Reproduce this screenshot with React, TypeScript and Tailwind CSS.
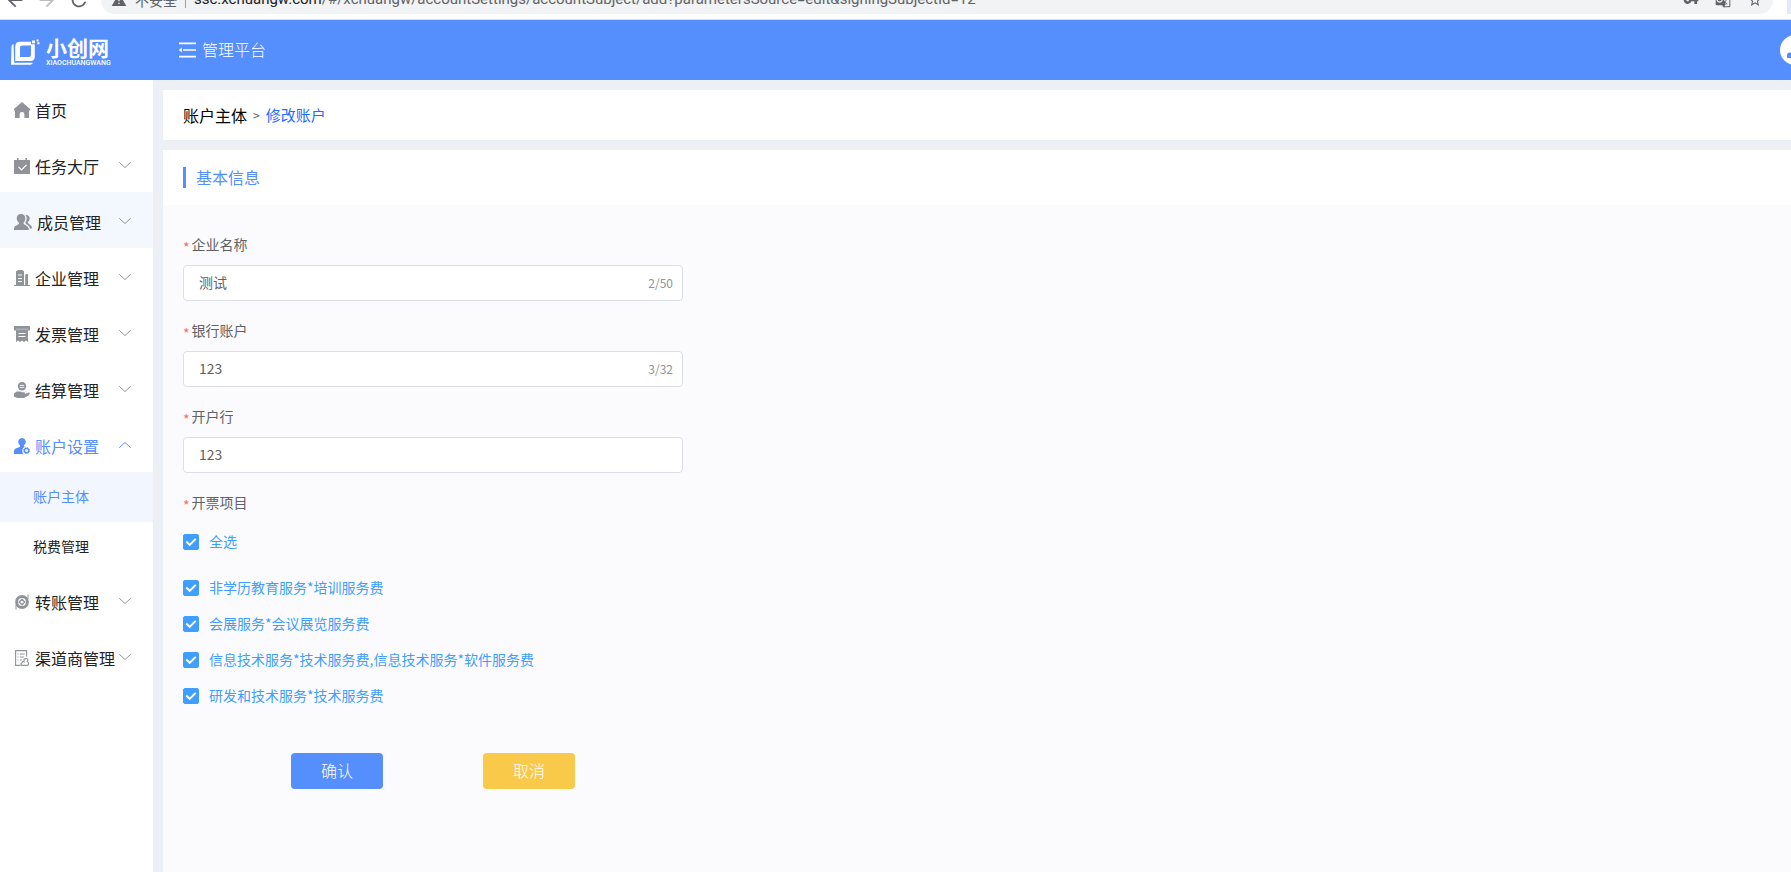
import { useState } from 'react';
import type { ReactNode } from 'react';
import {
  MdArrowBack,
  MdArrowForward,
  MdGTranslate,
  MdRefresh,
  MdStarBorder,
  MdVpnKey,
  MdWarning,
} from 'react-icons/md';

interface MenuItem {
  label: string;
  icon: ReactNode;
  children?: string[];
  leaf?: boolean;
}

/* 侧边栏图标 */
const HomeIcon = () => (
  <svg viewBox="0 0 16 16" className="size-4 shrink-0" fill="currentColor">
    <path d="M8 0 16 7v1.6h-1V16h-4.600v-3.600a2.400 2.400 0 0 0-4.800 0V16H1V8.600H0V7z" />
  </svg>
);

const TaskIcon = () => (
  <svg viewBox="0 0 16 16" className="size-4 shrink-0" fill="currentColor">
    <path d="M0 2h3V0h1.600v2h6.800V0H13v2h3v14H0z" />
    <path d="m4.500 8.800 3 3 5-5" fill="none" stroke="#fff" strokeWidth="1.200" />
  </svg>
);

const MemberIcon = () => (
  <svg viewBox="0 0 18 16" className="h-4 w-[18px] shrink-0" fill="currentColor">
    <path d="M7 0c2.600 0 4.300 1.700 4.300 4.300 0 1.700-.6 3.300-1.700 4.400v1.200l3.800 2.100c1 .6 1.400 1.300 1.400 2.500V16H0v-1.500c0-1.200.4-1.900 1.400-2.500L5 9.900V8.700C3.600 7.600 2.700 6 2.700 4.300 2.700 1.700 4.400 0 7 0z" />
    <path d="M11.400 1c2.400-.4 4.300 1 4.300 3.200 0 1.600-.8 2.900-1.900 3.700v1l2.800 2.300c1 .8 1.300 1.600 1.400 3.300h-2.200c-.2-1.800-.9-2.700-2.200-3.500l-2.300-1.300V8.400c1-1.200 1.400-2.600 1.400-4.200 0-1.300-.5-2.400-1.300-3.200z" />
    <path d="m10.600 8.700 5 6" stroke="#f3f8ff" strokeWidth=".9" fill="none" />
  </svg>
);

const CompanyIcon = () => (
  <svg viewBox="0 0 16 16" className="size-4 shrink-0" fill="currentColor">
    <path d="M2 1.500 4 0h4.500l1.500 1.500V15h1.200V4.500L14 3.800V15h2v1H0v-1h2z" />
    <path d="M4 5h4M4 8.500h4M4 11.500h4" stroke="#fff" strokeWidth="1.100" />
  </svg>
);

const InvoiceIcon = () => (
  <svg viewBox="0 0 16 16" className="size-4 shrink-0" fill="currentColor">
    <path d="M0 0h16v4.500h-2V16l-2-1.500L10 16l-2-1.500L6 16l-2-1.500L2 16V4.500H0z" />
    <path d="M2 3.200h12" stroke="#c4c6cb" strokeWidth=".8" />
    <path d="M4.500 7.500h7M4.500 10.500h7" stroke="#fff" strokeWidth="1.200" />
  </svg>
);

const SettleIcon = () => (
  <svg viewBox="0 0 16 16" className="size-4 shrink-0" fill="currentColor">
    <circle cx="8" cy="4.300" r="4.200" />
    <path d="M5.800 3.400h4.400M5.800 5.400h4.400" stroke="#fff" strokeWidth=".9" />
    <path d="M0 11.500 2.500 9.500H6l2 .8h2.800v1.500H7.500h3.800l3-1.400L16 11l-1.500 2.400L10 16H3.500L0 14.800z" />
  </svg>
);

const AccountIcon = () => (
  <svg viewBox="0 0 16 16" className="size-4 shrink-0" fill="currentColor">
    <path d="M8 0a3.800 3.800 0 0 1 2.200 6.900c-.4.300-.6.800-.2 1.200l.8.600a4.600 4.600 0 0 0-1.200 7.300H0v-2.600c0-1.600.8-2.500 2.300-3.100l3.300-1.400c.7-.4.700-1.500.2-2A3.800 3.800 0 0 1 8 0z" />
    <circle cx="12.600" cy="12.600" r="2.200" fill="none" stroke="currentColor" strokeWidth="1.300" />
    <circle cx="12.600" cy="12.600" r="3" fill="none" stroke="currentColor" strokeDasharray="1.200 1.150" />
  </svg>
);

const TransferIcon = () => (
  <svg viewBox="0 0 16 16" className="size-4 shrink-0" fill="none" stroke="currentColor">
    <circle cx="8" cy="8" r="5.400" strokeWidth="3" />
    <path d="M14 .5V5M2 11v4.500" strokeWidth="1" />
    <path d="m8 5.300 2.700 2.700L8 10.700 5.300 8z" strokeWidth="1.400" />
  </svg>
);

const ChannelIcon = () => (
  <svg viewBox="0 0 16 16" className="size-4 shrink-0" fill="none" stroke="currentColor" strokeWidth="1.100">
    <path d="M6.500 15.400H1.600V.6h11v6" />
    <path d="M3.500 4h1M5.800 4h5M3.500 7h1M5.800 7h4M3.500 10h1M5.800 10h2" />
    <path d="M8 15.400c-1.300-.2-1.500-2.300 0-2.700.1-1.100 1.300-1.600 2-.9V9.300c0-.8 1.200-.8 1.200 0 .8-1.600 3-.6 2.600 1l-.6 1.500c1.800.2 1.900 3.300 0 3.600z" />
  </svg>
);

const MENU: MenuItem[] = [
  { label: '首页', icon: <HomeIcon />, leaf: true },
  { label: '任务大厅', icon: <TaskIcon /> },
  { label: '成员管理', icon: <MemberIcon /> },
  { label: '企业管理', icon: <CompanyIcon /> },
  { label: '发票管理', icon: <InvoiceIcon /> },
  { label: '结算管理', icon: <SettleIcon /> },
  { label: '账户设置', icon: <AccountIcon />, children: ['账户主体', '税费管理'] },
  { label: '转账管理', icon: <TransferIcon /> },
  { label: '渠道商管理', icon: <ChannelIcon /> },
];

const INVOICE_ITEMS = [
  '非学历教育服务*培训服务费',
  '会展服务*会议展览服务费',
  '信息技术服务*技术服务费,信息技术服务*软件服务费',
  '研发和技术服务*技术服务费',
];

function BrowserBar() {
  return (
    <div className="flex h-5 shrink-0 items-end overflow-hidden border-b border-[#d5dae3] bg-white pb-[5px] text-[#5f6368]">
      <div className="flex h-7 shrink-0 items-center gap-2.5 pr-[11px] pl-1">
        <MdArrowBack size={22} />
        <MdArrowForward size={22} className="text-[#bbbdc0]" />
        <MdRefresh size={22} />
      </div>
      <div className="flex h-7 min-w-0 flex-1 items-center rounded-full bg-[#f1f3f4] pr-2.5 pl-2.5 text-sm">
        <MdWarning size={16} className="shrink-0" />
        <span className="ml-2 shrink-0">不安全</span>
        <span className="mx-2 h-4 w-px shrink-0 bg-[#9aa0a6]" />
        <span className="flex-1 truncate font-['Roboto'] text-[15px]">
          <span className="text-[#202124]">ssc.xchuangw.com</span>
          /#/xchuangw/accountSettings/accountSubject/add?parametersSource=edit&amp;signingSubjectId=12
        </span>
        <span className="flex shrink-0 gap-4">
          <MdVpnKey size={16} />
          <MdGTranslate size={16} />
          <MdStarBorder size={16} />
        </span>
      </div>
      <span className="ml-3.5 h-5 w-1 shrink-0 bg-[#e3e8f6]" />
    </div>
  );
}

function Logo() {
  return (
    <div className="flex w-[168px] shrink-0 items-center gap-[5px] pt-1 pl-[11px]">
      <svg viewBox="0 0 30 26" className="h-[26px] w-[30px]" fill="#fff">
        <path d="M2.500 5C1 5.600.500 6.500.500 8L0 25.700h18.500c1.700 0 2.700-.5 3.400-2H3.200z" />
        <path
          fillRule="evenodd"
          d="M9 2.800h11v2.400h3.800v12.300c0 2.800-1.400 4.500-4.300 4.500H4.200V8c0-3.500 1.500-5.200 4.800-5.200zm2.500 3.700C9.700 6.500 9 7.300 9 9v9h8.300c1.700 0 2.700-.9 2.700-2.600V6.500z"
        />
        <path d="M21 1.600h3v2.600h-3zM25.600.4h2v2h-2zM26.300 3.200h2.200v2h-2.200z" />
      </svg>
      <div className="flex flex-col gap-0.5">
        <span className="text-[21px] leading-[21px] font-bold">小创网</span>
        <span className="font-['Roboto'] text-[7px] leading-[7px] font-medium">XIAOCHUANGWANG</span>
      </div>
    </div>
  );
}

function Header() {
  return (
    <header className="flex h-15 shrink-0 items-center bg-[#558efd] text-white">
      <Logo />
      <button type="button" aria-label="收起菜单" className="ml-2.5">
        <svg viewBox="0 0 18 16" className="h-4 w-[18px]" fill="#fff">
          <path d="M1 .6h17v1.600H1zM5 7.200h13v1.600H5zM1 13.800h17v1.600H1zM.8 8l3-2.500v5z" />
        </svg>
      </button>
      <span className="ml-1.5 flex-1 pb-0.5 text-base font-light">管理平台</span>
      <div className="h-[30px] w-[11px] overflow-hidden">
        <svg viewBox="0 0 30 30" className="size-[30px]">
          <circle cx="15" cy="15" r="15" fill="#fff" />
          <path d="M7 23v-3c0-1.500 1-2.500 2.500-2.500h11c1.500 0 2.500 1 2.500 2.500v3z" fill="#558efd" />
          <circle cx="15.500" cy="12" r="4" fill="#558efd" />
        </svg>
      </div>
    </header>
  );
}

function Chevron({ up = false }: { up?: boolean }) {
  return (
    <svg
      viewBox="0 0 12 6"
      className="mr-[22px] mb-0.5 ml-auto h-1.5 w-3 shrink-0"
      fill="none"
      stroke="currentColor"
      strokeWidth="1"
    >
      <path d={up ? 'M.3 5.700 6 .5l5.700 5.200' : 'M.3.300 6 5.500 11.700.300'} />
    </svg>
  );
}

function Sidebar() {
  const [open, setOpen] = useState('账户设置');

  return (
    <nav className="w-[153px] shrink-0 bg-white">
      {MENU.map((item) => {
        const expanded = open === item.label;
        return (
          <div key={item.label}>
            <button
              type="button"
              onClick={() => setOpen(expanded ? '' : item.label)}
              className={`flex h-14 w-full items-center pt-1 pl-3.5 text-base whitespace-nowrap ${
                item.label === '成员管理' ? 'bg-[#f3f8ff]' : ''
              } ${expanded ? 'text-[#558efd]' : 'text-[#909399]'}`}
            >
              {item.icon}
              <span className={`ml-[5px] pb-px ${expanded ? '' : 'text-[#222]'}`}>{item.label}</span>
              {!item.leaf && <Chevron up={expanded} />}
            </button>
            {expanded &&
              item.children?.map((child) => (
                <a
                  key={child}
                  href="#"
                  className={`flex h-[50px] items-center pb-0.5 pl-[33px] text-sm ${
                    child === '账户主体' ? 'bg-[#f1f6ff] text-[#558efd]' : 'text-[#222]'
                  }`}
                >
                  {child}
                </a>
              ))}
          </div>
        );
      })}
    </nav>
  );
}

function RequiredMark() {
  return <span className="mr-0.5 inline-block align-[-3px] leading-4 text-[#f56c6c]">*</span>;
}

interface FieldProps {
  id: string;
  label: string;
  initial: string;
  max?: number;
}

function Field({ id, label, initial, max }: FieldProps) {
  const [value, setValue] = useState(initial);

  return (
    <div className="mb-[19px]">
      <label htmlFor={id} className="mb-[11px] block h-5 text-sm leading-5">
        <RequiredMark />
        {label}
      </label>
      <div className="flex h-9 max-w-[500px] items-center rounded border border-[#dcdfe6] bg-white pr-[9px] pl-[15px]">
        <input
          id={id}
          value={value}
          maxLength={max}
          onChange={(e) => setValue(e.target.value)}
          className="min-w-0 flex-1 bg-transparent pb-0.5 text-sm outline-none"
        />
        {max && (
          <span className="text-xs text-[#909399]">
            {value.length}/{max}
          </span>
        )}
      </div>
    </div>
  );
}

interface CheckProps {
  label: string;
  checked: boolean;
  onChange: () => void;
}

function Check({ label, checked, onChange }: CheckProps) {
  return (
    <label className="flex h-9 items-center gap-2.5 text-sm text-[#409eff]">
      <span className="grid size-4">
        <input
          type="checkbox"
          checked={checked}
          onChange={onChange}
          className="col-start-1 row-start-1 size-4 appearance-none rounded-xs border border-[#dcdfe6] bg-white checked:border-[#409eff] checked:bg-[#409eff]"
        />
        <svg
          viewBox="0 0 16 16"
          className="pointer-events-none col-start-1 row-start-1 size-4"
          fill="none"
          stroke="#fff"
          strokeWidth="2"
        >
          <path d="m3.300 7.500 3.400 3.400 6-6" />
        </svg>
      </span>
      <span className="pb-0.5">{label}</span>
    </label>
  );
}

function AccountForm() {
  const [selected, setSelected] = useState<string[]>(INVOICE_ITEMS);
  const allSelected = selected.length === INVOICE_ITEMS.length;

  const toggle = (name: string) =>
    setSelected((prev) => (prev.includes(name) ? prev.filter((n) => n !== name) : [...prev, name]));

  return (
    <form className="px-5 pt-[29px] text-[#606266]">
      <Field id="company" label="企业名称" initial="测试" max={50} />
      <Field id="account" label="银行账户" initial="123" max={32} />
      <Field id="bank" label="开户行" initial="123" />

      <fieldset>
        <legend className="mb-3 h-5 text-sm leading-5">
          <RequiredMark />
          开票项目
        </legend>
        <div className="mb-2.5">
          <Check
            label="全选"
            checked={allSelected}
            onChange={() => setSelected(allSelected ? [] : INVOICE_ITEMS)}
          />
        </div>
        {INVOICE_ITEMS.map((name) => (
          <Check key={name} label={name} checked={selected.includes(name)} onChange={() => toggle(name)} />
        ))}
      </fieldset>

      <div className="mt-[39px] flex gap-[100px] pl-[108px] text-base font-light text-white">
        <button type="button" className="h-9 w-[92px] rounded bg-[#558efd] pb-0.5">
          确认
        </button>
        <button type="button" className="h-9 w-[92px] rounded bg-[#f9c94a] pb-0.5">
          取消
        </button>
      </div>
    </form>
  );
}

export default function App() {
  return (
    <div className="flex min-h-screen flex-col overflow-x-hidden bg-[#ecf0f5] font-['Noto_Sans_CJK_SC',sans-serif]">
      <BrowserBar />
      <Header />
      <div className="flex flex-1">
        <Sidebar />
        <main className="flex min-w-0 flex-1 flex-col gap-2.5 pt-2.5 pl-2.5">
          {/* 面包屑 */}
          <div className="flex h-[50px] items-center gap-1.5 bg-white px-5">
            <a href="#" className="text-base text-black">
              账户主体
            </a>
            <span className="text-xs text-[#606266]">&gt;</span>
            <span className="text-[15px] text-[#1f6bff]">修改账户</span>
          </div>
          <section className="flex-1 bg-[#fbfbfd]">
            <div className="flex h-[55px] items-center bg-white px-5">
              <h2 className="border-l-3 border-[#558efd] pl-2.5 text-base leading-[21px] text-[#558efd]">
                基本信息
              </h2>
            </div>
            <AccountForm />
          </section>
        </main>
      </div>
    </div>
  );
}
